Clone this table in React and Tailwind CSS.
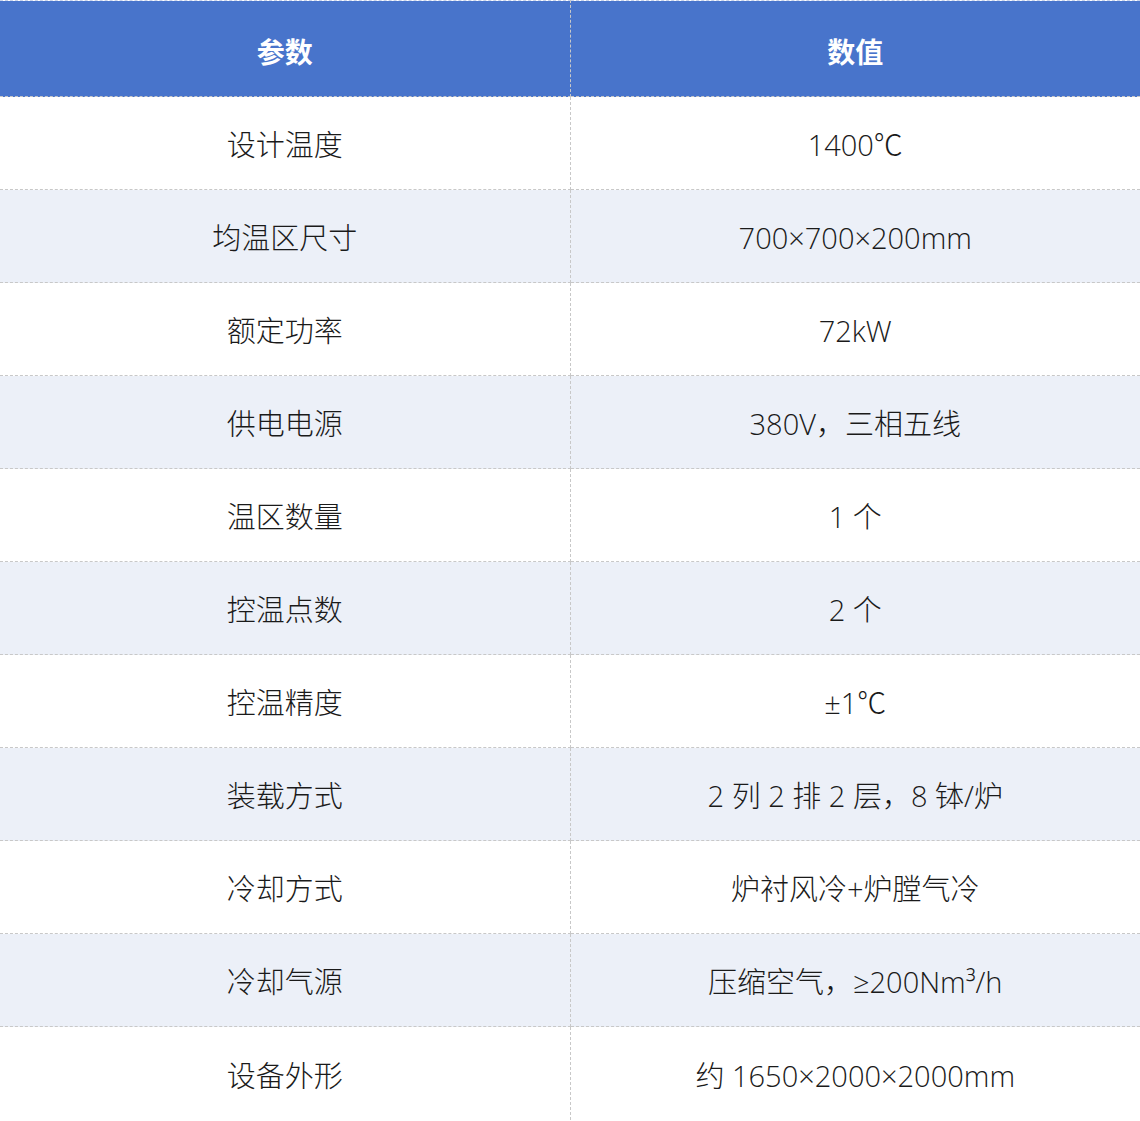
const rows = [
  ['设计温度', '1400℃'],
  ['均温区尺寸', '700×700×200mm'],
  ['额定功率', '72kW'],
  ['供电电源', '380V，三相五线'],
  ['温区数量', '1 个'],
  ['控温点数', '2 个'],
  ['控温精度', '±1℃'],
  ['装载方式', '2 列 2 排 2 层，8 钵/炉'],
  ['冷却方式', '炉衬风冷+炉膛气冷'],
  ['冷却气源', '压缩空气，≥200Nm³/h'],
  ['设备外形', '约 1650×2000×2000mm'],
]

export default function App() {
  return (
    <div className="w-[1140px] bg-white" style={{ fontFamily: '"Open Sans", "Noto Sans CJK SC", sans-serif' }}>
      <table className="w-full border-collapse table-fixed">
        <colgroup>
          <col className="w-[570px]" />
          <col />
        </colgroup>
        <thead>
          <tr className="h-[96px] bg-[#4874cb] text-white text-[28px] font-bold">
            <th className="pt-[6px] border-t border-dashed border-[#c9d4ec] border-r border-r-[#c8c8c8] border-b border-b-[#c8c8c8]">参数</th>
            <th className="pt-[6px] border-t border-dashed border-[#c9d4ec] border-b border-b-[#c8c8c8]">数值</th>
          </tr>
        </thead>
        <tbody>
          {rows.map(([k, v], i) => (
            <tr key={k} className={'h-[93px] text-[29px] font-light text-[#1a1a1a] ' + (i % 2 ? 'bg-[#ecf0f8]' : 'bg-white')}>
              <td className={'pt-[4px] text-center border-dashed border-[#c8c8c8] border-r ' + (i < rows.length - 1 ? 'border-b' : '')}>{k}</td>
              <td className={'pt-[4px] text-center border-dashed border-[#c8c8c8] ' + (i < rows.length - 1 ? 'border-b' : '')}>{v}</td>
            </tr>
          ))}
        </tbody>
      </table>
    </div>
  )
}
